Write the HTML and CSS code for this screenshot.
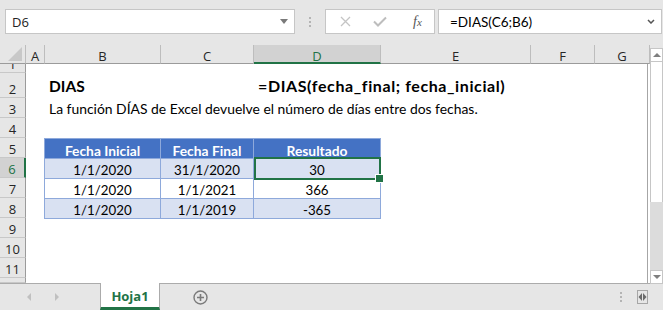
FILE: index.html
```html
<!DOCTYPE html>
<html lang="es">

<head>
    <meta charset="UTF-8">
    <title>DIAS</title>
    <link rel="stylesheet" href="styles.css">
</head>

<body>

    <div class="excel">
        <div class="formula_bar">
            <div class="name_box">
                <span>D6</span>
                <i class="caret"></i>
            </div>
            <div class="grip"><i></i><i></i><i></i></div>
            <div class="fx_box">
                <svg class="cancel" width="11" height="11" viewBox="0 0 11 11">
                    <path d="M1 1 L10 10 M10 1 L1 10" stroke="#c4c4c4" stroke-width="1.3" fill="none" />
                </svg>
                <svg class="enter" width="14" height="11" viewBox="0 0 14 11">
                    <path d="M1 5.5 L5 9.5 L13 1.5" stroke="#bdbdbd" stroke-width="2" fill="none" />
                </svg>
                <span class="fx">f<em>x</em></span>
            </div>
            <div class="formula">
                <span>=DIAS(C6;B6)</span>
                <svg width="8" height="5" viewBox="0 0 8 5">
                    <path d="M1 1 L4 4 L7 1" stroke="#555" stroke-width="1.5" fill="none" />
                </svg>
            </div>
        </div>

        <div class="main">
            <div class="sheet">
                <div class="corner"><i></i></div>
                <div class="col_head">A</div>
                <div class="col_head">B</div>
                <div class="col_head">C</div>
                <div class="col_head active">D</div>
                <div class="col_head">E</div>
                <div class="col_head">F</div>
                <div class="col_head">G</div>

                <div class="row_head">1</div>
                <div class="row_head">2</div>
                <div class="row_head">3</div>
                <div class="row_head">4</div>
                <div class="row_head">5</div>
                <div class="row_head active">6</div>
                <div class="row_head">7</div>
                <div class="row_head">8</div>
                <div class="row_head">9</div>
                <div class="row_head">10</div>
                <div class="row_head">11</div>
                <div class="row_head"></div>

                <div class="cell title">DIAS</div>
                <div class="cell syntax">=DIAS(fecha_final; fecha_inicial)</div>
                <div class="cell desc">La función DÍAS de Excel devuelve el número de días entre dos fechas.</div>

                <div class="data_table">
                    <div class="th">Fecha Inicial</div>
                    <div class="th">Fecha Final</div>
                    <div class="th">Resultado</div>
                    <div class="band">1/1/2020</div>
                    <div class="band">31/1/2020</div>
                    <div class="band">30</div>
                    <div>1/1/2020</div>
                    <div>1/1/2021</div>
                    <div>366</div>
                    <div class="band">1/1/2020</div>
                    <div class="band">1/1/2019</div>
                    <div class="band">-365</div>
                </div>

                <div class="selection"></div>
                <div class="edge"></div>
            </div>

            <div class="vscroll">
                <div class="sb_btn"><i class="up"></i></div>
                <div class="sb_thumb"></div>
                <div class="sb_track"></div>
                <div class="sb_btn"><i class="down"></i></div>
            </div>
        </div>

        <div class="tab_bar">
            <div class="tab_nav">
                <i class="prev"></i>
                <i class="next"></i>
            </div>
            <div class="tab">Hoja1</div>
            <svg class="add" width="15" height="15" viewBox="0 0 15 15">
                <circle cx="7.5" cy="7.5" r="6.5" stroke="#7a7a7a" stroke-width="1.4" fill="none" />
                <path d="M7.5 4 V11 M4 7.5 H11" stroke="#7a7a7a" stroke-width="1.6" />
            </svg>
            <div class="spacer"></div>
            <div class="grip small"><i></i><i></i><i></i></div>
            <svg class="split" width="11" height="14" viewBox="0 0 11 14">
                <rect x="0.5" y="0.5" width="10" height="13" stroke="#a6a6a6" fill="none" />
                <path d="M1.5 7 L5 3 V11 Z M9.5 7 L6 3 V11 Z" fill="#6b6b6b" />
            </svg>
        </div>
    </div>

</body>

</html>
```

FILE: styles.css
```css
* {
    margin: 0;
    padding: 0;
    box-sizing: border-box;
}

body {
    background: #e6e6e6;
    font-family: "Open Sans", "Noto Sans", sans-serif;
    color: #222;
}

.excel {
    width: 663px;
    height: 310px;
    display: flex;
    flex-direction: column;
    background: #e6e6e6;
    overflow: hidden;
}

/* barra de fórmulas */
.formula_bar {
    height: 45px;
    display: flex;
    align-items: flex-start;
    padding: 9px 1px 0 5px;
}

.name_box {
    width: 290px;
    height: 25px;
    background: #fff;
    border: 1px solid #c6c6c6;
    display: flex;
    align-items: center;
    justify-content: space-between;
    padding: 0 6px 0 6px;
    font-size: 13px;
}

.caret {
    border-left: 4px solid transparent;
    border-right: 4px solid transparent;
    border-top: 5px solid #7a7a7a;
}

.grip {
    width: 30px;
    height: 25px;
    display: flex;
    flex-direction: column;
    align-items: center;
    justify-content: center;
    gap: 2px;
}

.grip i {
    width: 2px;
    height: 2px;
    background: #b4b4b4;
}

.fx_box {
    width: 110px;
    height: 25px;
    background: #fff;
    border: 1px solid #c6c6c6;
    display: flex;
    align-items: center;
    padding-left: 14px;
    gap: 22px;
}

.fx {
    margin-left: 4px;
    font-family: "Liberation Serif", serif;
    font-style: italic;
    font-size: 14px;
    color: #555;
}

.fx em {
    font-size: 11px;
}

.formula {
    flex: 1;
    margin-left: 3px;
    height: 25px;
    background: #fff;
    border: 1px solid #c6c6c6;
    display: flex;
    align-items: center;
    justify-content: space-between;
    padding: 0 6px 0 11px;
    font-family: "Lato", sans-serif;
    font-size: 13.5px;
    color: #000;
}

/* hoja */
.main {
    display: flex;
    height: 239px;
}

.sheet {
    width: 650px;
    display: grid;
    grid-template-columns: 26px 19px 116px 93px 127px 150px 64px 55px;
    grid-template-rows: 19px 9px 25px repeat(9, 20px) 5px;
    background: #fff;
    border-bottom: 1px solid #ababab;
    font-family: "Lato", sans-serif;
    color: #000;
}

.corner {
    background: #e6e6e6;
    border-right: 1px solid #bdbdbd;
    border-bottom: 1px solid #9b9b9b;
    position: relative;
}

.corner i {
    position: absolute;
    right: 3px;
    bottom: 2px;
    border-left: 14px solid transparent;
    border-bottom: 14px solid #c8c8c8;
}

.col_head {
    background: #e6e6e6;
    border-right: 1px solid #bdbdbd;
    border-bottom: 1px solid #9b9b9b;
    font-family: "Open Sans", sans-serif;
    font-size: 13px;
    line-height: 16px;
    padding-top: 3px;
    text-align: center;
    color: #262626;
}

.col_head:last-of-type {
    border-right: none;
}

.col_head.active {
    background: #d2d2d2;
    color: #217346;
    border-bottom: 2px solid #217346;
}

.row_head {
    grid-column: 1;
    background: #e6e6e6;
    border-right: 1px solid #9b9b9b;
    border-bottom: 1px solid #c8c8c8;
    font-family: "Open Sans", sans-serif;
    font-size: 13px;
    line-height: 16px;
    display: flex;
    align-items: flex-end;
    justify-content: center;
    overflow: hidden;
    color: #262626;
}

.row_head.active {
    background: #d2d2d2;
    color: #217346;
    border-right: 2px solid #217346;
}

.cell {
    display: flex;
    align-items: flex-end;
    white-space: nowrap;
    padding-left: 4px;
    line-height: 1;
}

.title {
    grid-column: 3;
    grid-row: 3;
    font-size: 15.5px;
    font-weight: bold;
    padding-bottom: 4px;
}

.syntax {
    grid-column: 5;
    grid-row: 3;
    font-size: 16px;
    font-weight: bold;
    letter-spacing: 0.6px;
    padding-bottom: 4px;
}

.desc {
    grid-column: 3;
    grid-row: 4;
    font-size: 13.9px;
    padding-bottom: 2px;
}

.data_table {
    grid-column: 3 / 6;
    grid-row: 6 / 10;
    margin: 0 0 -1px -1px;
    display: grid;
    grid-template-columns: 116px 93px 127px;
    grid-auto-rows: 20px;
    border-left: 1px solid #8ea9db;
    border-top: 1px solid #8ea9db;
    font-size: 13.3px;
}

.data_table div {
    border-right: 1px solid #8ea9db;
    border-bottom: 1px solid #8ea9db;
    text-align: center;
    line-height: 19px;
    padding-top: 2px;
    overflow: hidden;
}

.data_table .th {
    background: #4472c4;
    color: #fff;
    font-weight: bold;
    font-size: 13.8px;
}

.data_table .band {
    background: #d9e1f2;
}

.selection {
    grid-column: 5;
    grid-row: 7;
    margin: -1px 0 -2px 0;
    border: 2px solid #217346;
    position: relative;
    z-index: 2;
}

.selection::after {
    content: "";
    position: absolute;
    right: -5px;
    bottom: -5px;
    width: 7px;
    height: 7px;
    background: #217346;
    border: 1px solid #fff;
}

.edge {
    grid-column: 8;
    grid-row: 2 / -1;
    margin-right: 2px;
    border-right: 1px solid #a6a6a6;
}

/* barra de desplazamiento */
.vscroll {
    width: 13px;
    display: flex;
    flex-direction: column;
    padding-top: 3px;
    background: #e6e6e6;
}

.sb_btn {
    height: 14px;
    background: #fff;
    border: 1px solid #c6c6c6;
    display: flex;
    align-items: center;
    justify-content: center;
}

.sb_thumb {
    height: 140px;
    background: #fff;
    border-left: 1px solid #c6c6c6;
    border-right: 1px solid #c6c6c6;
}

.sb_track {
    flex: 1;
    background: #dcdcdc;
}

.up {
    border-left: 4px solid transparent;
    border-right: 4px solid transparent;
    border-bottom: 4px solid #7f7f7f;
}

.down {
    border-left: 4px solid transparent;
    border-right: 4px solid transparent;
    border-top: 4px solid #7f7f7f;
}

/* pestañas */
.tab_bar {
    flex: 1;
    display: flex;
    align-items: center;
}

.tab_nav {
    width: 100px;
    align-self: stretch;
    display: flex;
    align-items: center;
    padding-left: 27px;
    gap: 24px;
}

.prev {
    border-top: 4px solid transparent;
    border-bottom: 4px solid transparent;
    border-right: 4px solid #c0c0c0;
}

.next {
    border-top: 4px solid transparent;
    border-bottom: 4px solid transparent;
    border-left: 4px solid #c0c0c0;
}

.tab {
    width: 60px;
    align-self: stretch;
    margin-top: -1px;
    background: #fff;
    border-left: 1px solid #ababab;
    border-right: 1px solid #ababab;
    border-bottom: 3px solid #217346;
    color: #217346;
    font-weight: bold;
    font-size: 13px;
    display: flex;
    align-items: center;
    justify-content: center;
    padding-top: 2px;
}

.add {
    margin-left: 33px;
}

.spacer {
    flex: 1;
}

.grip.small {
    width: 2px;
    height: 14px;
    margin-right: 15px;
}

.split {
    margin-right: 15px;
}
```
